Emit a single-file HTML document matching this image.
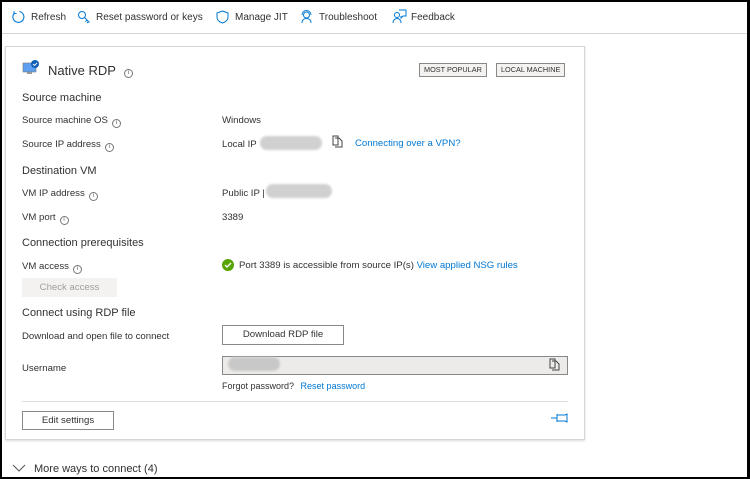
<!DOCTYPE html>
<html><head><meta charset="utf-8"><style>
*{margin:0;padding:0;box-sizing:border-box}
body{width:750px;height:479px;overflow:hidden;background:#fff;font-family:"Liberation Sans",sans-serif;font-size:9.6px;color:#323130;position:relative}
.frame{position:absolute;inset:0;border:2px solid #000;border-right-width:3px}
.a{position:absolute;white-space:nowrap}
.tb{position:absolute;top:0;left:0;right:0;height:34px;border-bottom:1px solid #d6d6d6}
.tb span{position:absolute;top:12px;font-size:10px}
.card{position:absolute;left:5px;top:46px;width:580px;height:394px;border:1px solid #d6d6d6;box-shadow:0 1px 2px rgba(0,0,0,.15)}
.h{font-size:11px;font-weight:normal;color:#323130}
.lnk{color:#0078d4}
.tag{position:absolute;top:63px;height:14px;border:1px solid #8a8886;background:#f3f2f1;font-size:7.3px;line-height:12px;padding:0 4px;color:#323130}
.btn{position:absolute;border:1px solid #8a8886;background:#fff;text-align:center;font-size:9.6px}
.blur{position:absolute;background:#d0d0d0;border-radius:8px;filter:blur(1px)}
.i{display:inline-block;width:9px;height:9px;border:1px solid #777;border-radius:50%;font-size:6px;line-height:7px;text-align:center;vertical-align:-1px;margin-left:4px;color:#555}
</style></head><body>
<div class="tb">
<svg class="a" style="left:11px;top:10px" width="14" height="14" viewBox="0 0 14 14"><path d="M8.5 1.5A5.5 5.5 0 1 1 3.5 3" fill="none" stroke="#0078d4" stroke-width="1.1"/><path d="M3 1v2.5h2.5" fill="none" stroke="#0078d4"/></svg>
<span style="left:31px">Refresh</span>
<svg class="a" style="left:77px;top:10px" width="14" height="14" viewBox="0 0 14 14"><circle cx="5" cy="5" r="3.5" fill="none" stroke="#0078d4"/><path d="M7.5 7.5l5 5M10 10l-1.5 1.5M11.5 11.5l-1.5 1.5" stroke="#0078d4" fill="none"/></svg>
<span style="left:96px">Reset password or keys</span>
<svg class="a" style="left:216px;top:10px" width="13" height="14" viewBox="0 0 13 14"><path d="M6.5 1L12 3v4c0 3-2.5 5-5.5 6C3.5 12 1 10 1 7V3z" fill="none" stroke="#0078d4"/></svg>
<span style="left:235px">Manage JIT</span>
<svg class="a" style="left:300px;top:10px" width="13" height="14" viewBox="0 0 13 14"><circle cx="6.5" cy="5" r="3" fill="none" stroke="#0078d4"/><path d="M2 5a4.5 4.5 0 0 1 9 0M2 13c0-3 2-4.5 4.5-4.5S11 10 11 13" fill="none" stroke="#0078d4"/></svg>
<span style="left:319px">Troubleshoot</span>
<svg class="a" style="left:392px;top:9px" width="15" height="15" viewBox="0 0 15 15"><circle cx="5" cy="6" r="2.5" fill="none" stroke="#0078d4"/><path d="M1 14c0-3 2-4.5 4-4.5s4 1.5 4 4.5M7 1h7v6h-3l-2 2V7" fill="none" stroke="#0078d4"/></svg>
<span style="left:411px">Feedback</span>
</div>

<div class="card"></div>
<svg class="a" style="left:22px;top:60px" width="18" height="16" viewBox="0 0 18 16"><rect x="1" y="3" width="13" height="9" fill="#5ea0ef" stroke="#777" stroke-width=".6"/><rect x="5" y="12" width="5" height="2" fill="#999"/><circle cx="13" cy="4" r="4" fill="#0f5fb5"/><path d="M11 4l1.5 1.5L15 3" stroke="#fff" fill="none" stroke-width=".9"/></svg>
<div class="a" style="left:48px;top:63px;font-size:13px">Native RDP<span class="i" style="margin-left:8px;vertical-align:1px">i</span></div>
<div class="tag" style="left:419px">MOST POPULAR</div>
<div class="tag" style="left:496px">LOCAL MACHINE</div>

<div class="a h" style="left:22px;top:92px">Source machine</div>
<div class="a" style="left:22px;top:115px">Source machine OS<span class="i">i</span></div>
<div class="a" style="left:222px;top:115px">Windows</div>
<div class="a" style="left:22px;top:139px">Source IP address<span class="i">i</span></div>
<div class="a" style="left:222px;top:139px">Local IP</div>
<div class="blur" style="left:260px;top:136px;width:62px;height:14px"></div>
<svg class="a" style="left:332px;top:135px" width="11" height="13" viewBox="0 0 11 13"><path d="M1 1h5v9H1zM3 3h4l3 3v6H3" fill="#fff" stroke="#444"/></svg>
<div class="a lnk" style="left:355px;top:138px">Connecting over a VPN?</div>

<div class="a h" style="left:22px;top:165px">Destination VM</div>
<div class="a" style="left:22px;top:188px">VM IP address<span class="i">i</span></div>
<div class="a" style="left:222px;top:188px">Public IP |</div>
<div class="blur" style="left:266px;top:184px;width:66px;height:14px"></div>
<div class="a" style="left:22px;top:212px">VM port<span class="i">i</span></div>
<div class="a" style="left:222px;top:212px">3389</div>

<div class="a h" style="left:22px;top:237px">Connection prerequisites</div>
<div class="a" style="left:22px;top:261px">VM access<span class="i">i</span></div>
<svg class="a" style="left:222px;top:259px" width="12" height="12" viewBox="0 0 12 12"><circle cx="6" cy="6" r="6" fill="#57a300"/><path d="M3 6l2 2 4-4" stroke="#fff" stroke-width="1.4" fill="none"/></svg>
<div class="a" style="left:239px;top:260px">Port 3389 is accessible from source IP(s) <span class="lnk">View applied NSG rules</span></div>
<div class="a" style="left:22px;top:278px;width:95px;height:19px;background:#f3f2f1;color:#a19f9d;text-align:center;line-height:19px">Check access</div>

<div class="a h" style="left:22px;top:307px">Connect using RDP file</div>
<div class="a" style="left:22px;top:331px">Download and open file to connect</div>
<div class="btn" style="left:222px;top:325px;width:122px;height:20px;line-height:18px">Download RDP file</div>
<div class="a" style="left:22px;top:363px">Username</div>
<div class="a" style="left:222px;top:356px;width:346px;height:19px;background:#edebe9;border:1px solid #8a8886"></div>
<div class="blur" style="left:228px;top:357px;width:52px;height:14px;background:#c8c8c8"></div>
<svg class="a" style="left:549px;top:358px" width="11" height="13" viewBox="0 0 11 13"><path d="M1 1h5v9H1zM3 3h4l3 3v6H3" fill="#edebe9" stroke="#444"/></svg>
<div class="a" style="left:222px;top:381px;font-size:9px">Forgot password? <span class="lnk" style="margin-left:4px">Reset password</span></div>
<div class="a" style="left:22px;top:401px;width:546px;border-top:1px solid #e1dfdd"></div>
<div class="btn" style="left:22px;top:411px;width:92px;height:19px;line-height:17px">Edit settings</div>
<svg class="a" style="left:551px;top:413px" width="17" height="10" viewBox="0 0 17 10"><path d="M0 5h6M6 1v8M6 2h8l2-1v8l-2-1H6" fill="none" stroke="#0078d4"/></svg>

<svg class="a" style="left:12px;top:464px" width="14" height="9" viewBox="0 0 14 9"><path d="M1 1l6 6 6-6" fill="none" stroke="#555"/></svg>
<div class="a" style="left:34px;top:463px;font-size:11px">More ways to connect (4)</div>
<div class="frame"></div>
</body></html>
